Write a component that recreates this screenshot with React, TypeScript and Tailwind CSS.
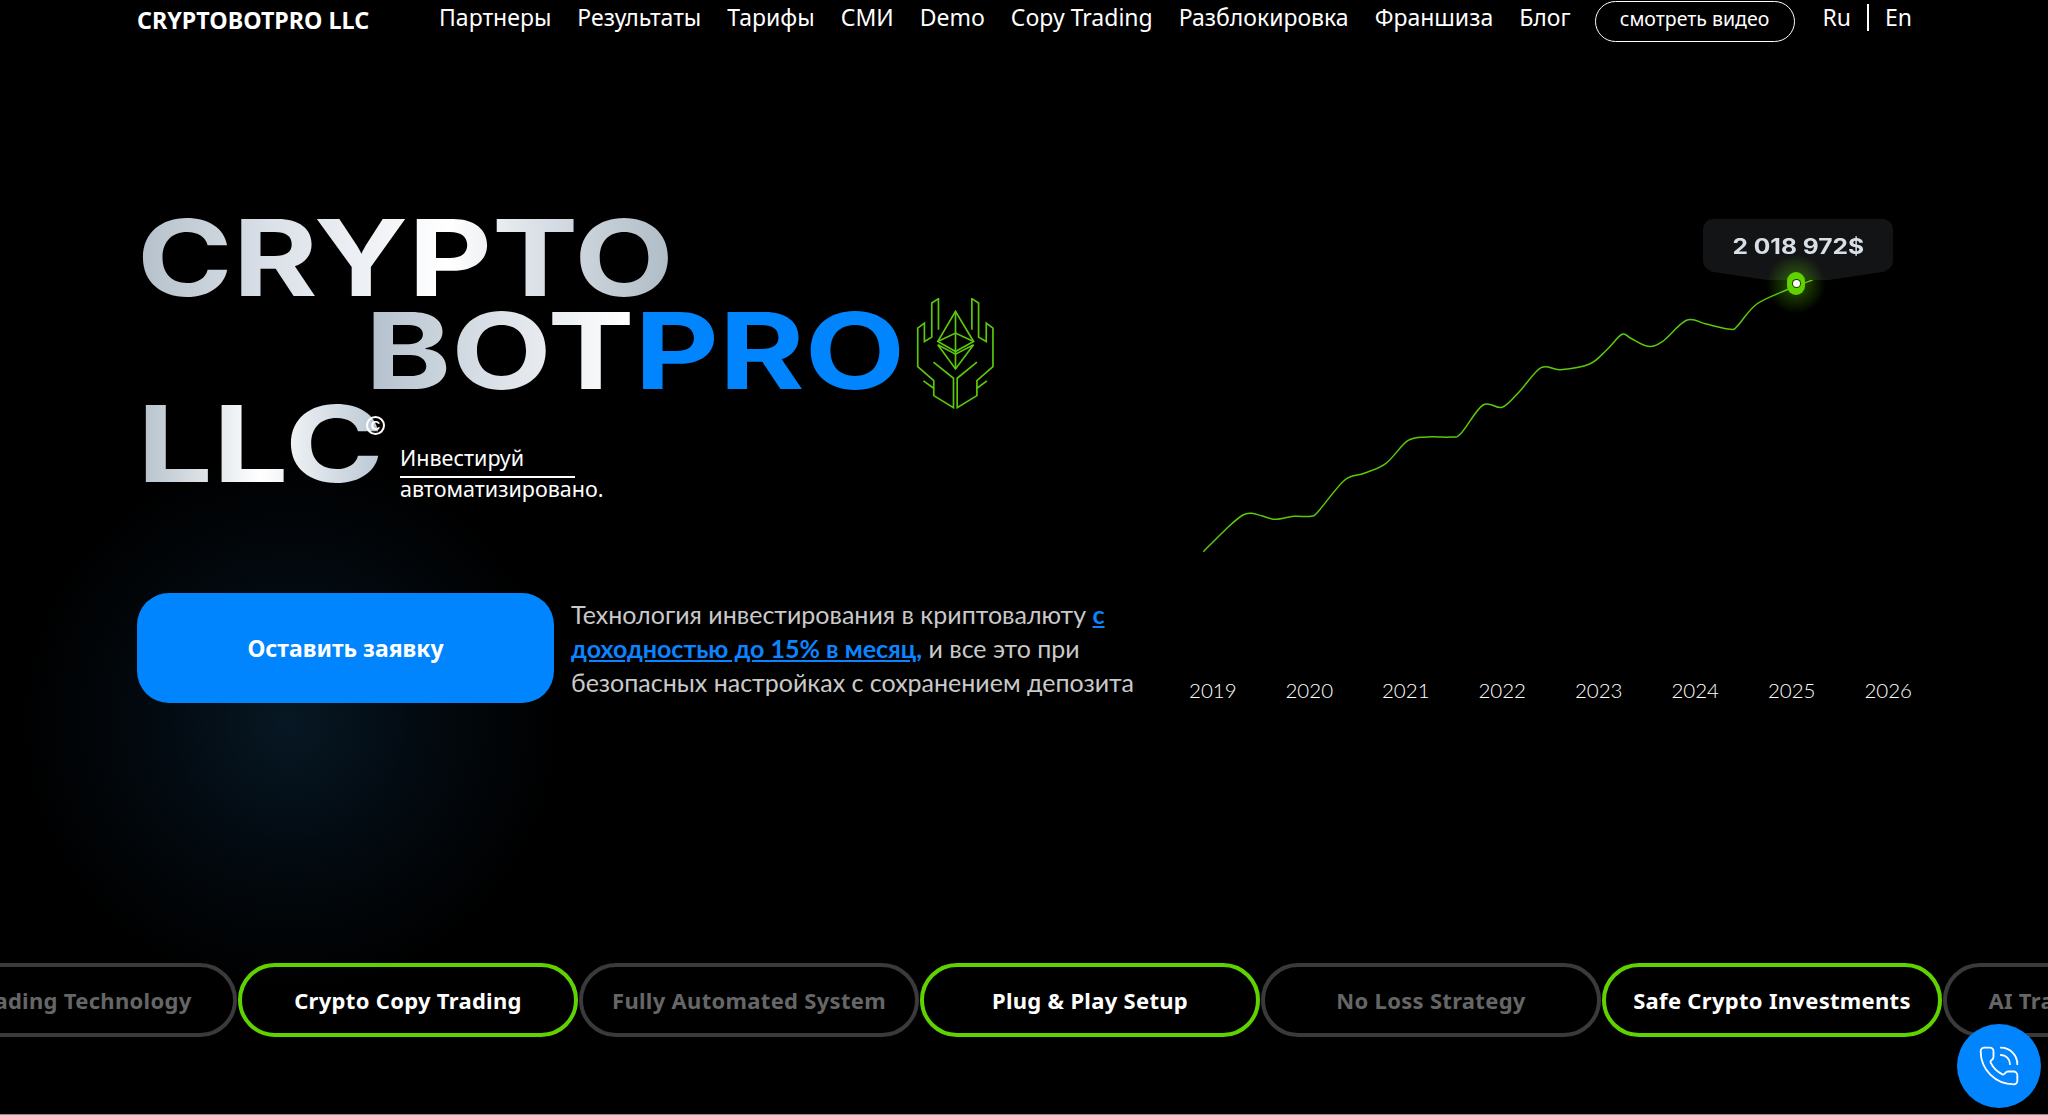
import { PhoneCall } from "lucide-react";

const navItems = ["Партнеры", "Результаты", "Тарифы", "СМИ", "Demo", "Copy Trading", "Разблокировка", "Франшиза", "Блог"];
const years = ["2019", "2020", "2021", "2022", "2023", "2024", "2025", "2026"];
const pills = [
  { label: "AI Trading Technology", active: false },
  { label: "Crypto Copy Trading", active: true },
  { label: "Fully Automated System", active: false },
  { label: "Plug & Play Setup", active: true },
  { label: "No Loss Strategy", active: false },
  { label: "Safe Crypto Investments", active: true },
  { label: "AI Trading Technology", active: false },
];

const chartPoints: [number, number][] = [
  [14.3, 332.7], [39.5, 307.7], [54, 296], [62.7, 294.3], [73.4, 297], [86.5, 300.3], [104.9, 297.3], [121.9, 297.3],
  [129, 292.7], [155.8, 261], [175.2, 254.3], [197, 244.3], [218.8, 221.7], [238.2, 218], [262.5, 218], [272.1, 214.3],
  [294, 186], [313.3, 188.3], [330.3, 172.7], [352.1, 148.7], [371.5, 150.7], [400.6, 145], [417.6, 131], [433, 115.3],
  [441.8, 119.3], [458.8, 127.3], [473.3, 122.7], [497.5, 101.3], [517, 105], [541.2, 110.3], [548.4, 107], [567.8, 85],
  [599.3, 70.3], [623.6, 61],
];

// catmull-rom through the points, so the line stays soft
function smoothPath(pts: [number, number][]) {
  let d = `M${pts[0][0]} ${pts[0][1]}`;
  for (let i = 0; i < pts.length - 1; i++) {
    const p0 = pts[Math.max(i - 1, 0)];
    const p1 = pts[i];
    const p2 = pts[i + 1];
    const p3 = pts[Math.min(i + 2, pts.length - 1)];
    const c1x = p1[0] + (p2[0] - p0[0]) / 6;
    const c1y = p1[1] + (p2[1] - p0[1]) / 6;
    const c2x = p2[0] - (p3[0] - p1[0]) / 6;
    const c2y = p2[1] - (p3[1] - p1[1]) / 6;
    d += ` C${c1x} ${c1y} ${c2x} ${c2y} ${p2[0]} ${p2[1]}`;
  }
  return d;
}

function Logo() {
  return (
    <svg viewBox="950 50 233 332" className="ml-[4px] mt-[6px] h-[111px] w-[78px] shrink-0" fill="none" stroke="#5bc90a" strokeWidth="5">
      <path d="M1017 145V52L997 65V167L975 180V125L955 140V255L1003 297V342L1062 378V290L1002 242" />
      <path d="M972 298L1003 320" />
      <path d="M1117 145V52L1137 65V167L1160 180V125L1180 140V255L1132 297V342L1073 378V290L1132 242" />
      <path d="M1162 298L1132 320" />
      <path d="M1068 90L1015 180L1068 210L1122 180Z" />
      <path d="M1015 180L1068 155L1122 180" />
      <path d="M1015 190L1068 218L1122 190L1068 262Z" />
      <path d="M1068 90V262" />
    </svg>
  );
}

export default function App() {
  return (
    <div className="relative box-border h-[1115px] w-[2048px] overflow-hidden border-b border-[#8a8a8a] bg-black bg-[radial-gradient(circle_at_290px_723px,#071824_0%,#030b12_120px,#000000_270px)] font-['Noto_Sans',sans-serif] text-white">
      <header className="flex h-[43px] items-start pl-[137px] pt-px">
        <div className="w-[302px] pt-[4px] text-[23.3px] leading-[30px] font-bold whitespace-nowrap">CRYPTOBOTPRO LLC</div>
        <nav className="flex items-start gap-[26px] text-[23px] leading-[32px]">
          {navItems.map((item) => (
            <a key={item} className="whitespace-nowrap">{item}</a>
          ))}
        </nav>
        <button className="ml-[24px] flex h-[41px] w-[200px] items-center justify-center rounded-[21px] border-[1.5px] border-white pb-[5px] text-[19.5px]">
          смотреть видео
        </button>
        <div className="ml-[28px] flex items-start text-[23px] leading-[32px]">
          <span>Ru</span>
          <span className="mx-4 mt-[3px] h-[27px] w-[2px] bg-white" />
          <span>En</span>
        </div>
      </header>

      <main className="flex pl-[137px]">
        <section className="w-[1052px] shrink-0">
          <div className="mt-[168px] font-['Inter',sans-serif] text-[106px] leading-[93px] font-bold">
            <div className="h-[93px]">
              <span className="inline-block origin-left scale-x-[1.22] bg-[linear-gradient(90deg,#b4c0ca_0%,#dbe1e8_25%,#ffffff_58%,#dfe4ea_72%,#aebbc5_100%)] bg-clip-text text-transparent">CRYPTO</span>
            </div>
            <div className="flex h-[93px] items-center">
              <div className="ml-[228px] w-[547px] shrink-0 origin-left scale-x-[1.23] whitespace-nowrap">
                <span className="bg-[linear-gradient(90deg,#b2c0cc_0%,#d9dfe6_45%,#ffffff_100%)] bg-clip-text text-transparent">BOT</span>
                <span className="text-[#0085ff]">PRO</span>
              </div>
              <Logo />
            </div>
            <div className="flex h-[93px] items-start">
              <div className="relative w-[263px] shrink-0">
                <span className="inline-block origin-left scale-x-[1.265] bg-[linear-gradient(90deg,#b4c0ca_0%,#ffffff_50%,#b8c6d2_100%)] bg-clip-text text-transparent">LLC</span>
                <span className="absolute left-[229px] top-[19px] flex h-[19px] w-[19px] items-center justify-center rounded-full border-2 border-white font-['Liberation_Sans',sans-serif] text-[13px] leading-none font-bold">C</span>
              </div>
              <div className="mt-[47px] font-['Noto_Sans',sans-serif] text-[21.5px] leading-[28px] font-normal">
                <div className="w-[175px] border-b-2 border-white pb-[4px]">Инвестируй</div>
                <div className="-mt-[3px] whitespace-nowrap">автоматизировано.</div>
              </div>
            </div>
          </div>
          <div className="mt-[103px] flex">
            <button className="h-[110px] w-[417px] shrink-0 rounded-[32px] bg-[#0085ff] text-[23px] font-bold">Оставить заявку</button>
            <p className="ml-[17px] mt-[4px] w-[580px] font-['Lato',sans-serif] text-[25px] leading-[34px] text-[#c9c9c9]">
              Технология инвестирования в криптовалюту{" "}
              <a className="font-bold text-[#0a84ff] underline">с доходностью до 15% в месяц,</a> и все это при безопасных настройках с сохранением депозита
            </p>
          </div>
        </section>

        <section className="mt-[176px] w-[723px] shrink-0">
          <div className="relative h-[340px]">
            <svg viewBox="0 0 723 340" className="h-[340px] w-[723px] overflow-visible" fill="none">
              <path d={smoothPath(chartPoints)} stroke="#5bc90a" strokeWidth="1.5" />
            </svg>
            <div className="absolute left-[514px] top-0 flex h-[52px] w-[190px] items-center justify-center rounded-[10px] bg-[#131415] pt-[4px] font-['Inter',sans-serif] text-[21px] font-bold text-[#d9dfe6]">
              <span className="scale-x-[1.17] whitespace-nowrap">2 018 972$</span>
            </div>
            <div className="absolute left-[518px] top-[52px] h-[9px] w-[182px] bg-[#131415] [clip-path:polygon(0_0,100%_0,67%_100%,33%_100%)]" />
            <div className="absolute left-[577px] top-[35px] h-[60px] w-[60px] rounded-full bg-[radial-gradient(circle,#5fd30070_0%,#5fd30000_70%)]" />
            <div className="absolute left-[598px] top-[53px] flex h-[23px] w-[18px] items-center justify-center rounded-full bg-[#5fd300]">
              <div className="h-[7px] w-[7px] rounded-full bg-white ring-1 ring-[#1c3a05]" />
            </div>
          </div>
          <div className="mt-[116px] flex justify-between font-['Lato',sans-serif] text-[20.5px] leading-[30px] font-light">
            {years.map((year) => (
              <span key={year}>{year}</span>
            ))}
          </div>
        </section>
      </main>

      <div className="mt-[258px] ml-[-103px] flex w-max gap-px">
        {pills.map((pill, i) => (
          <div
            key={i}
            className={`flex h-[74px] w-[340px] items-center justify-center rounded-[37px] border-4 text-[22px] font-bold tracking-[0.3px] ${
              pill.active ? "border-[#5fd300] text-white" : "border-[#3a3a3a] text-[#666666]"
            }`}
          >
            {pill.label}
          </div>
        ))}
      </div>

      <button className="absolute left-[1957px] top-[1024px] flex h-[84px] w-[84px] items-center justify-center rounded-full bg-[#0085ff]">
        <PhoneCall size={44} strokeWidth={1} />
      </button>
    </div>
  );
}
